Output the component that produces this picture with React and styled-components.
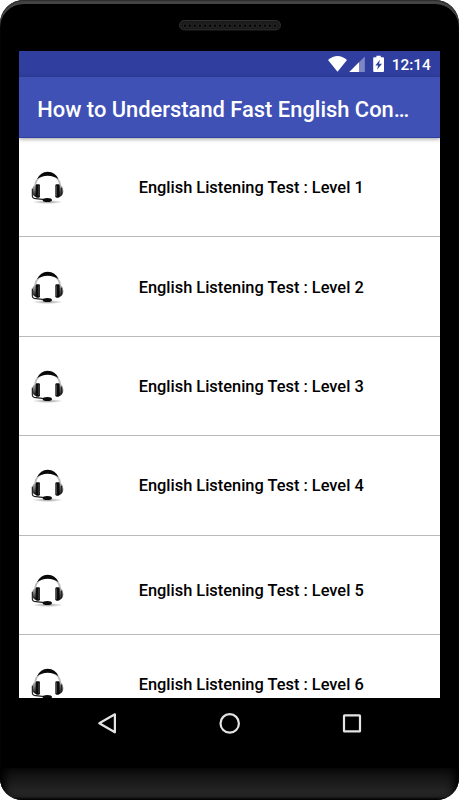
import styled, { createGlobalStyle } from 'styled-components';

const GlobalStyle = createGlobalStyle`
  body {
    margin: 0;
    background: #ffffff;
    font-family: Roboto, sans-serif;
  }
`;

const Phone = styled.div`
  box-sizing: border-box;
  display: flex;
  flex-direction: column;
  width: 459px;
  height: 800px;
  overflow: hidden;
  border-radius: 24px 24px 22px 22px;
  background: #000000;
  box-shadow: inset 0 1px 1px #2c2c2c, inset 0 4px 0 #444444;
`;

const SpeakerArea = styled.div`
  display: flex;
  justify-content: center;
  height: 31px;
  padding-top: 20px;
`;

const Screen = styled.div`
  display: flex;
  flex-direction: column;
  flex: none;
  width: 420.6px;
  height: 646.6px;
  margin: 0 auto;
  overflow: hidden;
  background: #ffffff;
`;

const StatusBar = styled.div`
  box-sizing: border-box;
  display: flex;
  flex: none;
  align-items: center;
  justify-content: flex-end;
  height: 26px;
  padding-right: 9px;
  background: #303f9f;
  color: #ffffff;
`;

const Clock = styled.span`
  margin-left: 7px;
  font-size: 15.4px;
  font-weight: 500;
  line-height: 26px;
  padding-top: 1px;
`;

const AppBar = styled.div`
  z-index: 1;
  box-sizing: border-box;
  flex: none;
  height: 61px;
  padding-left: 18px;
  background: #3f51b5;
  box-shadow: inset 0 -1px 0 #3040a0, 0 1px 4px rgba(0, 0, 0, 0.4);
`;

const Title = styled.h1`
  margin: 0;
  color: #ffffff;
  font-size: 21.9px;
  font-weight: 500;
  line-height: 65px;
  white-space: nowrap;
`;

const List = styled.ul`
  flex: none;
  margin: 0;
  padding: 0;
  list-style: none;
`;

const Row = styled.li`
  box-sizing: border-box;
  display: flex;
  align-items: center;
  height: 99.4px;
  padding-top: ${(props) => props.$offset || 2}px;
  padding-left: 11.8px;
  border-bottom: 1px solid #b9b9b9;
`;

const RowText = styled.span`
  margin-left: 73.7px;
  color: #000000;
  font-size: 16.4px;
  font-weight: 500;
  line-height: 20px;
  white-space: nowrap;
`;

const NavBar = styled.div`
  display: flex;
  flex: none;
  align-items: flex-start;
  justify-content: space-between;
  height: 57px;
  padding: 13.4px 96px 0;
`;

const Chin = styled.div`
  flex: 1;
  background: linear-gradient(#0b0b0b, #242424 70%, #242424 90%, #000000);
  box-shadow: inset 9px 0 9px -4px #000000, inset -9px 0 9px -4px #000000;
`;

const levels = [
  { name: 'English Listening Test : Level 1' },
  { name: 'English Listening Test : Level 2' },
  { name: 'English Listening Test : Level 3' },
  { name: 'English Listening Test : Level 4' },
  { name: 'English Listening Test : Level 5', offset: 13 },
  { name: 'English Listening Test : Level 6' },
];

const Speaker = () => (
  <svg width="102" height="11" viewBox="0 0 102 11">
    <rect x="0.5" y="0.5" width="101" height="9.4" rx="4.7" fill="#1b1b1b" stroke="#303030" />
    {Array.from({ length: 19 }, (_, i) => (
      <circle key={i} cx={6 + i * 5} cy="5.7" r="1.8" fill="#050505" stroke="#333333" strokeWidth="0.7" />
    ))}
  </svg>
);

const StatusIcons = () => (
  <svg width="57" height="20" viewBox="0 0 57 20" fill="#ffffff">
    <path d="M0 6Q9.5-2 19 6L9.5 17.8Z" />
    <path d="M36.8 2.5V18H21.3Z" opacity="0.38" />
    <path d="M31 8.3V18H21.3Z" />
    <path
      fillRule="evenodd"
      d="M48.4 1.8h4.4v1.5h2.2q1 0 1 1v12.6q0 1-1 1h-8.8q-1 0-1-1V4.3q0-1 1-1h2.2ZM52 5.7l-4.7 5.8h2.8l-1 4.2 4.9-5.9h-3Z"
    />
  </svg>
);

const Headset = () => (
  <svg width="34" height="36" viewBox="48 45 102 108">
    <defs>
      <linearGradient id="cup" x1="0" y1="0" x2="0" y2="1">
        <stop offset="0" stopColor="#c4c4c4" />
        <stop offset="0.45" stopColor="#777777" />
        <stop offset="1" stopColor="#0a0a0a" />
      </linearGradient>
      <radialGradient id="floor">
        <stop offset="0" stopColor="#999999" />
        <stop offset="1" stopColor="#999999" stopOpacity="0" />
      </radialGradient>
    </defs>
    <ellipse cx="98" cy="141" rx="46" ry="6" fill="url(#floor)" />
    <path d="M60 91Q64 62 98 57Q132 62 136 91" fill="none" stroke="#bbbbbb" strokeWidth="5" />
    <path d="M66 73Q76 50 98 50Q121 50 131 73Q117 62 98 62Q79 62 66 73Z" fill="#080808" />
    <path d="M66 87Q51 91 51 108Q51 124 66 127Z" fill="url(#cup)" />
    <path d="M130 87Q145 91 145 108Q145 124 130 127Z" fill="url(#cup)" />
    <rect x="62" y="88" width="13" height="40" rx="4" fill="#0b0b0b" />
    <rect x="121" y="88" width="13" height="40" rx="4" fill="#0b0b0b" />
    <path d="M72 92V124M124 92V124" stroke="#777777" strokeWidth="2" />
    <path d="M139 98V120" stroke="#222222" strokeWidth="4" />
    <path d="M52 101V122Q52 130 63 131L88 134" fill="none" stroke="#222222" strokeWidth="3.5" />
    <ellipse cx="97" cy="135" rx="14" ry="6" fill="#0b0b0b" />
  </svg>
);

const BackIcon = () => (
  <svg width="22" height="24" viewBox="0 0 22 24">
    <path d="M3.3 12.3L18.9 3.3V21.3Z" fill="none" stroke="#e4e4e4" strokeWidth="2.2" strokeLinejoin="round" />
  </svg>
);

const HomeIcon = () => (
  <svg width="22" height="24" viewBox="0 0 22 24">
    <circle cx="10.7" cy="12.4" r="9.2" fill="none" stroke="#e4e4e4" strokeWidth="2.2" />
  </svg>
);

const RecentIcon = () => (
  <svg width="22" height="24" viewBox="0 0 22 24">
    <rect x="3" y="4.4" width="16" height="16" rx="0.5" fill="none" stroke="#e4e4e4" strokeWidth="2.2" />
  </svg>
);

export default function App() {
  return (
    <>
      <GlobalStyle />
      <Phone>
        <SpeakerArea>
          <Speaker />
        </SpeakerArea>
        <Screen>
          <StatusBar>
            <StatusIcons />
            <Clock>12:14</Clock>
          </StatusBar>
          <AppBar>
            <Title>How to Understand Fast English Con…</Title>
          </AppBar>
          <List>
            {levels.map((level) => (
              <Row key={level.name} $offset={level.offset}>
                <Headset />
                <RowText>{level.name}</RowText>
              </Row>
            ))}
          </List>
        </Screen>
        <NavBar>
          <BackIcon />
          <HomeIcon />
          <RecentIcon />
        </NavBar>
        <Chin />
      </Phone>
    </>
  );
}
